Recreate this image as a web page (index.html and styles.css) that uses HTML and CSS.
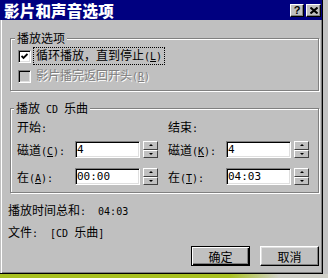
FILE: index.html
```html
<!DOCTYPE html>
<html lang="zh-CN">
<head>
    <meta charset="UTF-8">
    <title>影片和声音选项</title>
    <link rel="stylesheet" href="styles.css">
</head>
<body>
    <div class="dialog">
        <div class="titlebar">
            <span class="title">影片和声音选项</span>
            <div class="title-btns">
                <span class="tbtn help">?</span>
                <span class="tbtn close">
                    <svg width="8" height="7" viewBox="0 0 8 7"><path d="M0.5 0.5 L7.5 6.5 M7.5 0.5 L0.5 6.5" stroke="#000" stroke-width="2"/></svg>
                </span>
            </div>
        </div>
        <div class="client">
            <!-- 播放选项 -->
            <div class="group g1">
                <div class="legend">播放选项</div>
                <div class="check-row first">
                    <span class="checkbox">
                        <svg width="7" height="7" viewBox="0 0 7 7"><path d="M0.5 3 L2.5 5 L6.5 1" stroke="#000" stroke-width="1.8" fill="none"/></svg>
                    </span>
                    <span class="check-label focus">循环播放，直到停止<span class="mono">(<u>L</u>)</span></span>
                </div>
                <div class="check-row disabled">
                    <span class="checkbox"></span>
                    <span class="check-label">影片播完返回开头<span class="mono">(<u>R</u>)</span></span>
                </div>
            </div>
            <!-- 播放 CD 乐曲 -->
            <div class="group g2">
                <div class="legend">播放<span class="mono"> CD </span>乐曲</div>
                <div class="cd-cols">
                    <div class="cd-col">
                        <div class="col-head">开始<span class="mono">:</span></div>
                        <div class="field-row">
                            <span class="field-label">磁道<span class="mono">(<u>C</u>):</span></span>
                            <div class="textbox mono">4</div>
                            <div class="spinner"><span class="spin up"></span><span class="spin down"></span></div>
                        </div>
                        <div class="field-row second">
                            <span class="field-label">在<span class="mono">(<u>A</u>):</span></span>
                            <div class="textbox mono">00:00</div>
                            <div class="spinner"><span class="spin up"></span><span class="spin down"></span></div>
                        </div>
                    </div>
                    <div class="cd-col">
                        <div class="col-head">结束<span class="mono">:</span></div>
                        <div class="field-row">
                            <span class="field-label">磁道<span class="mono">(<u>K</u>):</span></span>
                            <div class="textbox mono">4</div>
                            <div class="spinner"><span class="spin up"></span><span class="spin down"></span></div>
                        </div>
                        <div class="field-row second">
                            <span class="field-label">在<span class="mono">(<u>T</u>):</span></span>
                            <div class="textbox mono">04:03</div>
                            <div class="spinner"><span class="spin up"></span><span class="spin down"></span></div>
                        </div>
                    </div>
                </div>
            </div>
            <p class="info total">播放时间总和<span class="mono">:  04:03</span></p>
            <p class="info file">文件<span class="mono">:  [CD </span>乐曲<span class="mono">]</span></p>
            <div class="buttons">
                <button class="btn default">确定</button>
                <button class="btn">取消</button>
            </div>
        </div>
    </div>
</body>
</html>
```

FILE: styles.css
```css
body {
    margin: 0;
    width: 328px;
    height: 278px;
    overflow: hidden;
    font-family: "Noto Sans CJK SC", sans-serif;
    font-size: 12px;
    color: #000;
    background: linear-gradient(to right, #a8c020 70%, #d0d0c8 85%) bottom / 100% 4px no-repeat, #c4c4c4;
}

/* ASCII de ancho fijo, como la fuente del sistema */
.mono {
    font-family: "DejaVu Sans Mono", monospace;
    font-size: 10px;
    white-space: pre;
}

.dialog {
    width: 323px;
    height: 274px;
    box-sizing: border-box;
    display: flex;
    flex-direction: column;
    background: #c0c0c0;
    border-right: 1px solid #000;
    border-bottom: 1px solid #000;
    box-shadow: inset -1px -1px 0 #808080;
}

/* barra de titulo */
.titlebar {
    height: 20px;
    flex: none;
    display: flex;
    align-items: center;
    justify-content: space-between;
    padding: 0 1px 0 4px;
    background: #000080;
}
.title {
    color: #fff;
    font-weight: 900;
    font-size: 15.5px;
    line-height: 20px;
    letter-spacing: 0.2px;
}
.title-btns {
    display: flex;
    gap: 2px;
}
.tbtn {
    width: 14px;
    height: 13px;
    box-sizing: border-box;
    display: flex;
    align-items: center;
    justify-content: center;
    background: #c0c0c0;
    border: 1px solid;
    border-color: #fff #000 #000 #fff;
    box-shadow: inset -1px -1px 0 #808080;
    font: bold 11px "Liberation Sans", sans-serif;
    line-height: 11px;
}
.tbtn.close {
    width: 15px;
}

.client {
    flex: 1;
    padding: 0 3px 0 8px;
    box-shadow: inset 1px 0 0 #c0c0c0, inset 2px 0 0 #fff;
}

/* grupos */
.group {
    margin-left: 2px;
    border: 1px solid #808080;
    box-shadow: 1px 1px 0 #fff, inset 1px 1px 0 #fff;
}
.legend {
    width: fit-content;
    height: 14px;
    line-height: 14px;
    margin: -8px 0 0 -3px;
    padding: 0 2px;
    background: #c0c0c0;
    white-space: pre;
}
.g1 {
    margin-top: 18px;
    padding: 0 6px 6px 7px;
}
.g2 {
    margin-top: 17px;
    padding: 0 6px 7px 6px;
}

.check-row {
    display: flex;
    align-items: center;
    height: 16px;
    margin-top: 4px;
}
.check-row.first {
    margin-top: 3px;
}
.checkbox {
    width: 13px;
    height: 13px;
    box-sizing: border-box;
    display: flex;
    align-items: center;
    justify-content: center;
    background: #fff;
    border: 1px solid;
    border-color: #808080 #fff #fff #808080;
    box-shadow: inset 1px 1px 0 #000, inset -1px -1px 0 #dfdfdf;
}
.check-label {
    margin-left: 2px;
    padding: 0 2px;
    line-height: 14px;
    border: 1px solid transparent;
}
.check-label.focus {
    border: 1px dotted #000;
}
.disabled .checkbox {
    background: #c0c0c0;
}
.disabled .check-label {
    color: #808080;
    text-shadow: 1px 1px 0 #fff;
}

/* campos CD */
.cd-cols {
    display: grid;
    grid-template-columns: 141px 141px;
    column-gap: 10px;
}
.col-head {
    margin-top: 5px;
    height: 14px;
    line-height: 14px;
}
.field-row {
    display: flex;
    align-items: center;
    height: 17px;
    margin-top: 7px;
}
.field-row.second {
    margin-top: 10px;
}
.field-label {
    width: 58px;
    flex: none;
}
.textbox {
    width: 65px;
    height: 17px;
    box-sizing: border-box;
    padding-left: 1px;
    line-height: 15px;
    background: #fff;
    border: 1px solid;
    border-color: #808080 #fff #fff #808080;
    box-shadow: inset 1px 1px 0 #000, inset -1px -1px 0 #dfdfdf;
}
.textbox.mono {
    font-size: 11px;
}
.spinner {
    width: 15px;
    height: 17px;
    margin-left: 3px;
    display: flex;
    flex-direction: column;
}
.spin {
    flex: 1;
    display: flex;
    align-items: center;
    justify-content: center;
    background: #c0c0c0;
    border: 1px solid;
    border-color: #fff #404040 #404040 #fff;
}
.spin::before {
    content: "";
    border-left: 2px solid transparent;
    border-right: 2px solid transparent;
}
.spin.up::before {
    border-bottom: 2px solid #000;
}
.spin.down::before {
    border-top: 2px solid #000;
}

.info {
    margin: 8px 0 0;
    height: 14px;
    line-height: 14px;
    white-space: pre;
}
.info.total {
    margin-top: 10px;
}

/* botones */
.buttons {
    display: flex;
    justify-content: flex-end;
    gap: 10px;
    margin-top: 7px;
}
.btn {
    width: 59px;
    height: 20px;
    padding: 0;
    font-family: "Noto Sans CJK SC", sans-serif;
    font-size: 12px;
    color: #000;
    background: #c0c0c0;
    border: 1px solid;
    border-color: #fff #000 #000 #fff;
    box-shadow: inset -1px -1px 0 #808080, inset 1px 1px 0 #dfdfdf;
}
.btn.default {
    border: 1px solid #000;
    box-shadow: inset 1px 1px 0 #fff, inset -1px -1px 0 #000, inset -2px -2px 0 #808080;
}
```
